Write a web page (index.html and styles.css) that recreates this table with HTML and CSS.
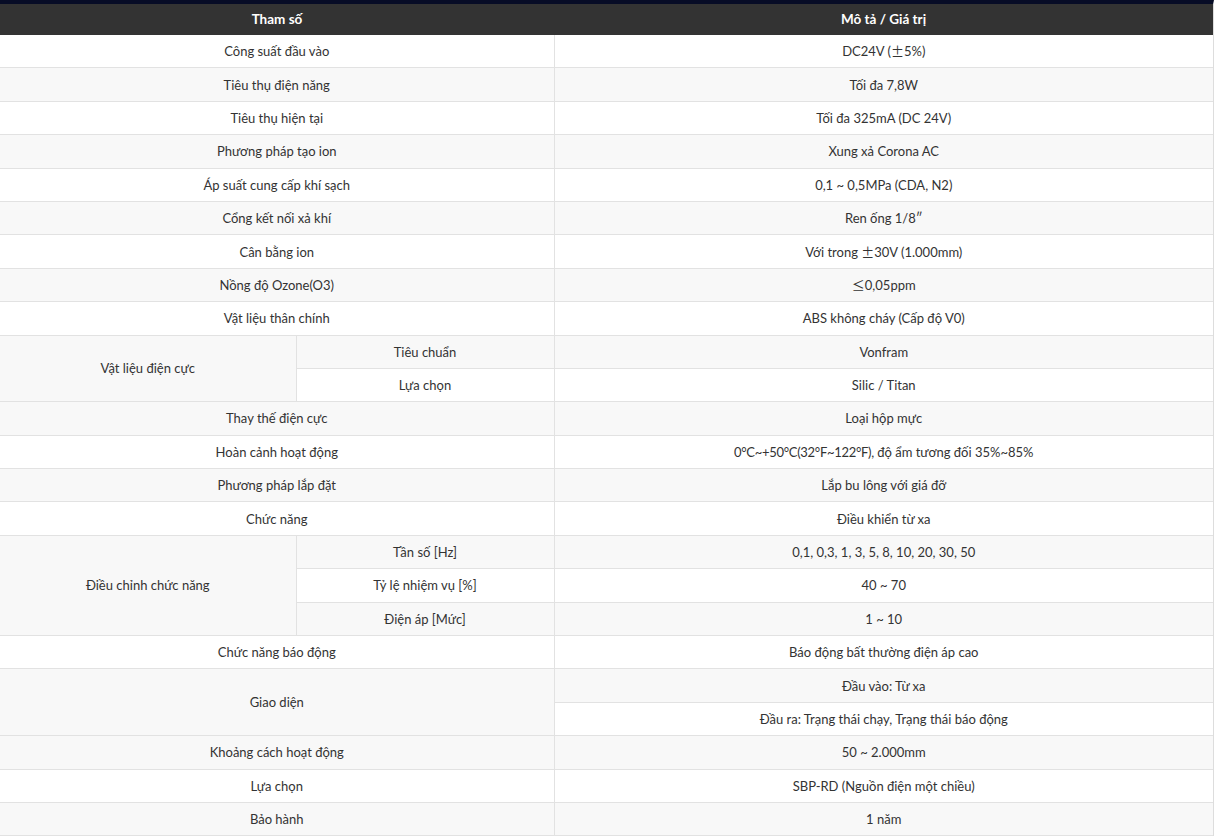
FILE: index.html
```html
<!DOCTYPE html>
<html lang="vi">
<head>
<meta charset="utf-8">
<title>Thông số kỹ thuật</title>
<link rel="stylesheet" href="styles.css">
</head>
<body>
<div class="wrap">
<table class="spec">
<colgroup><col class="c1"><col class="c2"><col class="c3"></colgroup>
<thead>
<tr><th colspan="2">Tham số</th><th>Mô tả / Giá trị</th></tr>
</thead>
<tbody>
<tr><td colspan="2">Công suất đầu vào</td><td>DC24V (<span class="wide">±</span>5%)</td></tr>
<tr><td colspan="2">Tiêu thụ điện năng</td><td>Tối đa 7,8W</td></tr>
<tr><td colspan="2">Tiêu thụ hiện tại</td><td>Tối đa 325mA (DC 24V)</td></tr>
<tr><td colspan="2">Phương pháp tạo ion</td><td>Xung xả Corona AC</td></tr>
<tr><td colspan="2">Áp suất cung cấp khí sạch</td><td>0,1 ~ 0,5MPa (CDA, N2)</td></tr>
<tr><td colspan="2">Cổng kết nối xả khí</td><td>Ren ống 1/8″</td></tr>
<tr><td colspan="2">Cân bằng ion</td><td>Với trong <span class="wide">±</span>30V (1.000mm)</td></tr>
<tr><td colspan="2">Nồng độ Ozone(O3)</td><td><span class="wide">≤</span>0,05ppm</td></tr>
<tr><td colspan="2">Vật liệu thân chính</td><td>ABS không cháy (Cấp độ V0)</td></tr>
<tr><td rowspan="2" class="span">Vật liệu điện cực</td><td class="sub">Tiêu chuẩn</td><td>Vonfram</td></tr>
<tr><td class="sub">Lựa chọn</td><td>Silic / Titan</td></tr>
<tr><td colspan="2">Thay thế điện cực</td><td>Loại hộp mực</td></tr>
<tr><td colspan="2">Hoàn cảnh hoạt động</td><td><span class="cond">0°C~+50°C(32°F~122°F),</span> độ ẩm tương đối 35%~85%</td></tr>
<tr><td colspan="2">Phương pháp lắp đặt</td><td>Lắp bu lông với giá đỡ</td></tr>
<tr><td colspan="2">Chức năng</td><td>Điều khiển từ xa</td></tr>
<tr><td rowspan="3" class="span">Điều chỉnh chức năng</td><td class="sub">Tần số [Hz]</td><td>0,1, 0,3, 1, 3, 5, 8, 10, 20, 30, 50</td></tr>
<tr><td class="sub">Tỷ lệ nhiệm vụ [%]</td><td>40 ~ 70</td></tr>
<tr><td class="sub">Điện áp [Mức]</td><td>1 ~ 10</td></tr>
<tr><td colspan="2">Chức năng báo động</td><td>Báo động bất thường điện áp cao</td></tr>
<tr><td colspan="2" rowspan="2" class="span">Giao diện</td><td>Đầu vào: Từ xa</td></tr>
<tr><td>Đầu ra: Trạng thái chạy, Trạng thái báo động</td></tr>
<tr><td colspan="2">Khoảng cách hoạt động</td><td>50 ~ 2.000mm</td></tr>
<tr><td colspan="2">Lựa chọn</td><td>SBP-RD (Nguồn điện một chiều)</td></tr>
<tr><td colspan="2">Bảo hành</td><td>1 năm</td></tr>
</tbody>
</table>
</div>
</body>
</html>
```
FILE: styles.css
```css
html, body {
  margin: 0;
  padding: 0;
  background: #ffffff;
}
body {
  font-family: Lato, "Liberation Sans", sans-serif;
  font-size: 13px;
  color: #333333;
}
.wrap {
  width: 1213px;
  border-top: 4px solid #070c26;
  border-right: 1px solid #dddddd;
}
.spec {
  width: 100%;
  border-collapse: collapse;
  table-layout: fixed;
}
.c1 { width: 296px; }
.c2 { width: 258px; }
.spec th {
  background: #333333;
  color: #ffffff;
  font-weight: 700;
  font-size: 13.5px;
  height: 31px;
  padding: 0 10px;
  text-align: center;
  line-height: 31px;
}
.spec td {
  text-align: center;
  padding: 0 10px;
  height: 32.4px;
  line-height: 18px;
  border-bottom: 1px solid #e2e2e2;
  border-right: 1px solid #e2e2e2;
}
.spec td:last-child { border-right: none; }
.spec tbody tr:nth-child(even) td { background: #f8f8f8; }
.spec tbody tr:nth-child(odd) td { background: #ffffff; }
.wide {
  font-family: "Noto Sans CJK KR", sans-serif;
}
.cond {
  letter-spacing: -0.3px;
}
```
